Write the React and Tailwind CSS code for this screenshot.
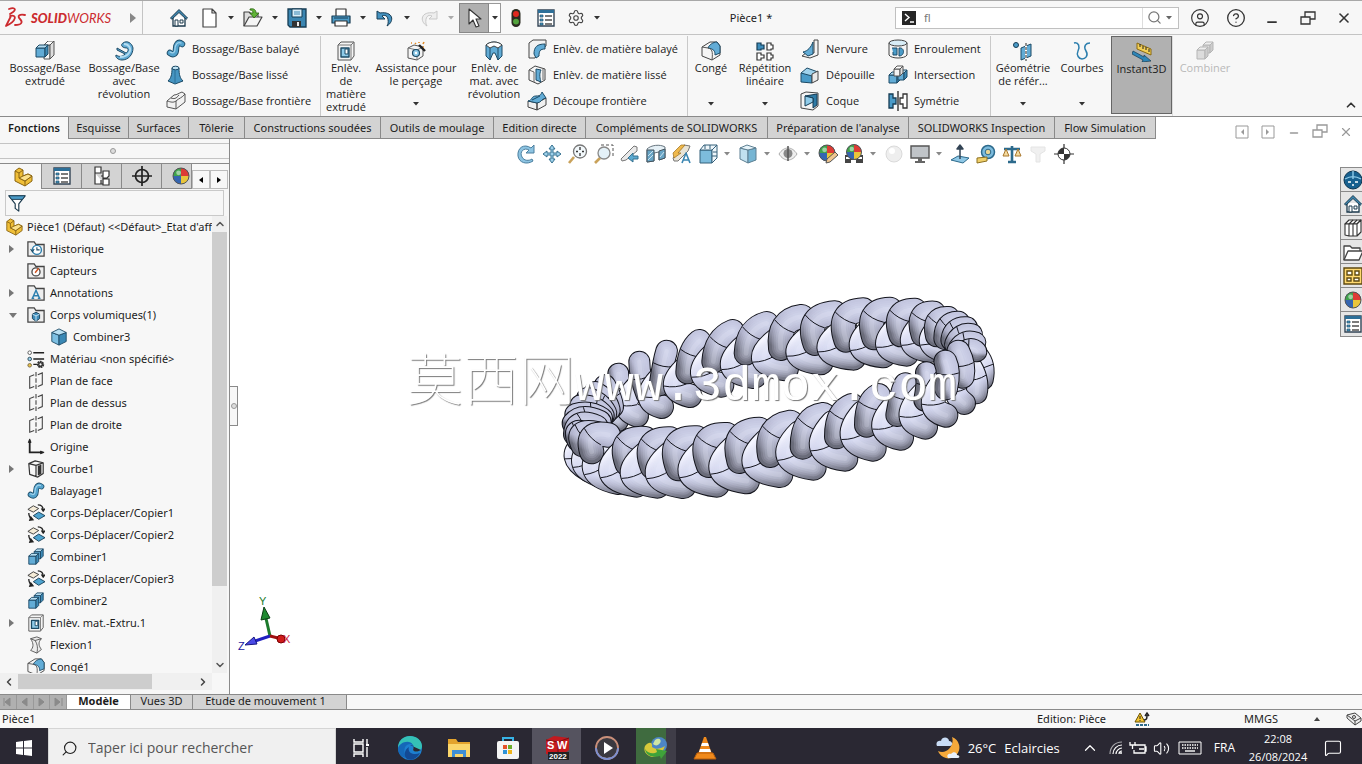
import { useState } from "react";
import { Search, Settings, Minus, X, ChevronUp, ChevronDown, ChevronLeft, ChevronRight, Volume2, CircleUser, CircleHelp, MessageSquare } from "lucide-react";

const Box = ({ x, y, w, h, d, front = "#62acd6", top = "#b5ddf1", side = "#3d8ab6", line = "#1d4a66" }) => (
    <g stroke={line} strokeWidth="1" strokeLinejoin="round">
        <path d={`M${x} ${y + d}h${w}v${h}h${-w}z`} fill={front} />
        <path d={`M${x} ${y + d}l${d} ${-d}h${w}l${-d} ${d}z`} fill={top} />
        <path d={`M${x + w} ${y + d}l${d} ${-d}v${h}l${-d} ${d}z`} fill={side} />
    </g>
);

const GreyBox = (props) => <Box front="#f4f4f4" top="#ffffff" side="#dedede" line="#555" {...props} />;

const Ball = ({ cx = 10, cy = 10, r = 8 }) => (
    <g>
        <circle cx={cx} cy={cy} r={r} fill="#3a7fd0" />
        <path d={`M${cx} ${cy}V${cy - r}A${r} ${r} 0 0 0 ${cx - r} ${cy}z`} fill="#3fa34a" />
        <path d={`M${cx} ${cy}V${cy - r}A${r} ${r} 0 0 1 ${cx + r} ${cy}z`} fill="#dd3b35" />
        <path d={`M${cx} ${cy}H${cx - r}A${r} ${r} 0 0 0 ${cx} ${cy + r}z`} fill="#3565b0" />
        <path d={`M${cx} ${cy}H${cx + r}A${r} ${r} 0 0 1 ${cx} ${cy + r}z`} fill="#e9c53a" />
        <circle cx={cx} cy={cy} r={r} fill="none" stroke="#555" strokeWidth="1" />
        <circle cx={cx - r * 0.3} cy={cy - r * 0.4} r={r * 0.3} fill="#fff" opacity="0.5" />
    </g>
);

const folder = <path d="M1 18V2h7l2 3h9v13z" fill="#eeeeee" stroke="#444" strokeWidth="1.4" />;
const sweep = (
    <g fill="none" strokeLinecap="round">
        <path d="M4 14c4 3 6 0 6-4s2-8 6-5" stroke="#1d4b66" strokeWidth="6.400" />
        <path d="M4 14c4 3 6 0 6-4s2-8 6-5" stroke="#54a3cd" strokeWidth="4.600" />
        <path d="M4 13c4 2 5 0 5-3s2-8 6-6" stroke="#a5d4ec" strokeWidth="1.200" />
    </g>
);
const fillet = (
    <g strokeLinejoin="round">
        <path d="M1 6l8-5h7l3 4v9l-8 5-10-4z" fill="#f5f5f5" stroke="#444" />
        <path d="M7 7c1-3 5-6 9-6l3 4v7l-5 2c0-4-1-6-7-7z" fill="#62acd6" stroke="#1d4b66" />
        <path d="M1 6l6 1c4 1 5 3 4 12" fill="none" stroke="#555" />
    </g>
);
const cutExtrude = (
    <g strokeLinejoin="round">
        <path d="M2 4l3-3h13v14l-3 4H2z" fill="#f5f5f5" stroke="#555" />
        <path d="M2 4h13l3-3M15 4v15" fill="none" stroke="#777" />
        <path d="M5 7h8v9H5z" fill="#8fcbe9" stroke="#1d4b66" strokeWidth="1.400" />
        <path d="M9 8h3v5H9z" fill="#fff" stroke="#1d4b66" />
    </g>
);
const listGlyph = (
    <g>
        <path d="M2 2h16v16H2z" fill="#fff" stroke="#345" strokeWidth="1.400" />
        <path d="M2 2h16v3H2z" fill="#2d6f98" />
        {[7, 11, 15].map((y) => (
            <g key={y}>
                <path d={`M4 ${y}h3v2H4z`} fill="#4a9bc8" stroke="#1d4b66" strokeWidth=".7" />
                <path d={`M9 ${y + 1}h7`} stroke="#333" strokeWidth="1.300" />
            </g>
        ))}
    </g>
);
const combine = (
    <g>
        <Box x={8} y={1} w={7} h={8} d={3} />
        <Box x={2} y={6} w={8} h={9} d={3} />
    </g>
);
const house = (
    <g>
        <path d="M4 9v9h12V9" fill="#fff" stroke="#1c3a4d" strokeWidth="1.300" />
        <path d="M10 1.500L1.500 10l1.300 1.300L10 4.500l7.200 6.800 1.300-1.300z" fill="#3c87b1" stroke="#1c3a4d" />
        <path d="M6 12h3v6H6zM11 12h3v3h-3z" fill="#fff" stroke="#1c3a4d" />
    </g>
);

const glyphs = {
    home: house,
    doc: <path d="M4 1h9l4 4v14H4zM13 1v4h4" fill="#fff" stroke="#444" strokeWidth="1.200" strokeLinejoin="round" />,
    open: (
        <g strokeLinejoin="round">
            <path d="M1 18V4h5l2 2h7v3" fill="#ddd" stroke="#444" strokeWidth="1.200" />
            <path d="M1 18L6 9h13l-5 9z" fill="#f5f5f5" stroke="#444" strokeWidth="1.200" />
            <path d="M7 1c4-1 6 1 6 4h3l-5 5-4-5h3c0-2-1-3-3-3z" fill="#5fb336" stroke="#2c6412" strokeWidth=".8" />
        </g>
    ),
    save: (
        <g>
            <path d="M1 1h18v18H3l-2-2z" fill="#3b86b2" stroke="#163c54" strokeWidth="1.300" />
            <path d="M5 1h10v8H5z" fill="#d9edf8" stroke="#163c54" />
            <path d="M7 4h6M7 6h6" stroke="#3b86b2" />
            <path d="M5 13h9v6H5z" fill="#333" /><path d="M10 14h2v4h-2z" fill="#eee" />
        </g>
    ),
    print: (
        <g strokeLinejoin="round">
            <path d="M5 8V1h10v7" fill="#fff" stroke="#333" strokeWidth="1.200" />
            <path d="M1 8h18v7H1z" fill="#4d9cc8" stroke="#163c54" strokeWidth="1.200" />
            <path d="M4 13h12v5H4z" fill="#fff" stroke="#333" strokeWidth="1.200" />
            <path d="M3 10h14" stroke="#163c54" />
        </g>
    ),
    undo: <path d="M2 3v8h8L7 8c4-2 7 1 6 8l-1 2c8-5 6-15-7-13z" fill="#4492c0" stroke="#163c54" strokeLinejoin="round" />,
    redo: <path d="M18 3v8h-8l3-3c-4-2-7 1-6 8l1 2C0 13 2 3 15 5z" fill="#eeeeee" stroke="#c9c9c9" strokeLinejoin="round" />,
    cursor: <path d="M5 1v15l4-4 3 7 3-1-3-7h5z" fill="#fff" stroke="#333" strokeWidth="1.100" strokeLinejoin="round" />,
    traffic: (
        <g>
            <rect x="5" y="0" width="10" height="20" rx="5" fill="#2b2b20" />
            <circle cx="10" cy="5.500" r="3.300" fill="#e0291f" /><circle cx="10" cy="14" r="3.300" fill="#52a33c" />
        </g>
    ),
    list: listGlyph,
    extrude: (
        <g>
            <GreyBox x={9} y={0} w={6} h={14} d={4} />
            <Box x={1} y={4} w={9} h={9} d={3} />
        </g>
    ),
    revolve: (
        <g>
            <path d="M3 7l9 5c2-1 3-4 1-5C8 7 6 4 9 2c4-3 9 0 10 5 0 7-5 12-11 12-4 0-7-3-6-5 3 2 6 2 9-1l-8-4z" fill="#62acd6" stroke="#1d4b66" strokeLinejoin="round" />
            <path d="M10 3c5 0 8 5 5 9-2 3-6 4-9 4" fill="none" stroke="#b5ddf1" strokeWidth="1.800" />
        </g>
    ),
    sweep,
    loft: (
        <g stroke="#1d4b66" strokeLinejoin="round">
            <path d="M6 3c0 7-1 10-4 13l7 3 8-3c-3-3-4-6-4-13z" fill="#4695c2" />
            <ellipse cx="9.500" cy="3" rx="3.500" ry="1.800" fill="#bfe2f3" />
            <path d="M9 5v14" stroke="#2a6e96" />
        </g>
    ),
    boundary: (
        <g stroke="#555" strokeLinejoin="round" fill="#f2f2f2">
            <path d="M1 10l7-6c3 0 5-2 8-3l3 2v8l-9 7-9-2z" />
            <path d="M1 10c4 1 6 2 9 0 3-3 6-3 9-7M10 10v8M5 7c3 1 5 1 8-3" fill="none" />
        </g>
    ),
    cutExtrude,
    hole: (
        <g strokeLinejoin="round">
            <path d="M2 7l6-3 9 2v9l-6 4-9-2z" fill="#f4f4f4" stroke="#555" /><path d="M2 7l9 2v10M11 9l6-3" fill="none" stroke="#777" />
            <circle cx="10" cy="12" r="3.500" fill="#8fcbe9" stroke="#1d4b66" strokeWidth="1.200" /><circle cx="10" cy="12" r="1.200" fill="#fff" />
            <path d="M13 4l6 6" stroke="#222" strokeWidth="2.400" /><path d="M9 3l1-1M13 1v1M17 3l1-2M5 2h1M17 6h1" stroke="#e08b2a" strokeWidth="1.600" />
        </g>
    ),
    cutRevolve: (
        <g strokeLinejoin="round">
            <path d="M2 4v11l4 4 3-7h2l3 7 4-4V4c-4-4-12-4-16 0z" fill="#62acd6" stroke="#1d4b66" />
            <path d="M2 4c4-4 12-4 16 0l-4 3-4-2-4 2z" fill="#fff" stroke="#444" /><path d="M6 7v12M14 7v12" stroke="#1d4b66" />
        </g>
    ),
    cutSweep: (
        <g strokeLinejoin="round">
            <path d="M2 4l4-3h13v6l-7 5-4 7H2z" fill="#f2f2f2" stroke="#444" />
            <path d="M7 15c0-7 3-10 11-10v5c-5 0-6 2-6 7l-3 2z" fill="#62acd6" stroke="#1d4b66" />
        </g>
    ),
    cutLoft: (
        <g strokeLinejoin="round">
            <path d="M2 5l6-4 10 3v11l-7 4-9-4z" fill="#f5f5f5" stroke="#444" />
            <path d="M9 4l5 1c-2 4-1 9 0 12l-5-2z" fill="#62acd6" stroke="#1d4b66" /><path d="M2 5l5 2v10M16 4v11" stroke="#666" fill="none" />
        </g>
    ),
    cutBoundary: (
        <g stroke="#1d4b66" strokeLinejoin="round">
            <path d="M1 10l9 2v7l-9-3zM10 12l9-5v7l-9 5z" fill="#f0f0f0" stroke="#444" />
            <path d="M1 10c4 0 3-5 8-5s5-2 6-4l4 6c-4 0-5 5-9 5z" fill="#62acd6" /><path d="M5 9l8-4" />
        </g>
    ),
    fillet,
    pattern: (
        <g strokeWidth="1.200">
            <path d="M2 2h4v2h3v4H6v1H2z" fill="#3e8dbb" stroke="#163c54" />
            <path d="M12 2h4v2h2v4h-2v1h-4zM2 12h4v2h3v3H6v2H2zM12 12h4v2h2v3h-2v2h-4z" fill="#fff" stroke="#333" />
        </g>
    ),
    rib: (
        <g strokeLinejoin="round">
            <path d="M14 1h4v15l-8 3-8-2 4-3h8z" fill="#f3f3f3" stroke="#444" /><path d="M13 3v12l-5 2-5-4c5-1 8-5 10-10z" fill="#62acd6" stroke="#1d4b66" />
        </g>
    ),
    draft: <g stroke="#1d4b66" strokeLinejoin="round"><path d="M1 8v9l11 1V8z" fill="#4a9bc8" /><path d="M1 8l6-5 11 4-6 4z" fill="#9fd2ec" /><path d="M12 9l6-3v9l-6 3z" fill="#e9e9e9" stroke="#444" /></g>,
    shell: (
        <g strokeLinejoin="round">
            <path d="M1 3l5-2 12 1v13l-5 4-12-2z" fill="#f4f4f4" stroke="#444" /><path d="M5 5l12-2v11l-4 3V7z" fill="#2f7ba6" stroke="#163c54" /><path d="M5 5v10l8-4V7z" fill="#8fcbe9" stroke="#163c54" />
        </g>
    ),
    wrap: (
        <g>
            <path d="M1 4v12c2 4 16 4 18 0V4z" fill="#f4f4f4" stroke="#444" /><ellipse cx="10" cy="4" rx="9" ry="3" fill="#d8edf7" stroke="#444" />
            <path d="M4 9h5v7H5v-3M11 9c6-1 6 8 0 8z" fill="#4a9bc8" stroke="#1d4b66" />
        </g>
    ),
    intersect: <g><Box x={1} y={7} w={8} h={8} d={3} /><Box x={10} y={5} w={6} h={7} d={3} /><GreyBox x={6} y={1} w={6} h={7} d={3} /></g>,
    mirror: (
        <g strokeWidth="1.300">
            <path d="M1 3h4v4h3v6H5v4H1z" fill="#4a9bc8" stroke="#163c54" /><path d="M10 0v20" stroke="#222" /><path d="M19 3h-4v4h-3v6h3v4h4z" fill="#fff" stroke="#333" />
        </g>
    ),
    refGeo: (
        <g>
            <circle cx="3" cy="4" r="2.500" fill="#4a9bc8" stroke="#163c54" /><path d="M8 7l10-4v12L8 19z" fill="#62acd6" stroke="#1d4b66" /><path d="M13 3v17" stroke="#fff" strokeWidth="2" /><path d="M13 2v18" stroke="#222" strokeDasharray="3 1" />
        </g>
    ),
    curves: <path d="M2 2c5-1 6 4 4 8s1 8 4 8 7-3 4-8 0-8 4-8" fill="none" stroke="#2d7fae" strokeWidth="1.500" />,
    instant: (
        <g strokeLinejoin="round">
            <path d="M5 1l14 6v6L5 7z" fill="#f3cf55" stroke="#8b6a10" /><path d="M8 2v3M11 4v3M14 5v3M17 7v3" stroke="#222" />
            <path d="M1 9l11 6v-2l7 6-9 1 1-2L0 12z" fill="#2f86b8" stroke="#163c54" strokeWidth=".7" />
        </g>
    ),
    combineGrey: (
        <g>
            <Box x={8} y={1} w={7} h={8} d={3} front="#dcdcdc" top="#eee" side="#cdcdcd" line="#b5b5b5" />
            <Box x={2} y={6} w={8} h={9} d={3} front="#dcdcdc" top="#eee" side="#cdcdcd" line="#b5b5b5" />
        </g>
    ),
    combine,
    part: (
        <g stroke="#8a6410" strokeLinejoin="round">
            <path d="M2 9V4l4-3 4 2v6l5-2 4 2v5l-7 5-10-5z" fill="#f0bf38" /><path d="M2 4l4 2 4-3M6 6v5l6 3 7-5M12 14v5" fill="none" /><path d="M6 11l4-2 5-2 4 2-7 5z" fill="#fbe08a" />
        </g>
    ),
    tree: (
        <g fill="#fff" stroke="#333" strokeWidth="1.200">
            <path d="M3 1h6v6H3zM3 7v11h6v-4M5 18h6M9 10h3" /><path d="M11 5h6v5l-2 2h-4zM11 13h6v6h-6z" />
        </g>
    ),
    target: <g fill="none" stroke="#222" strokeWidth="1.700"><circle cx="10" cy="10" r="6.500" /><path d="M10 0v20M0 10h20" /></g>,
    ball: <Ball />,
    filter: <g strokeLinejoin="round"><path d="M1 2h18l-7 9v8l-4-3v-5z" fill="#fff" stroke="#1c3a4d" strokeWidth="1.300" /><path d="M1 2h18l-3 4H4z" fill="#4a9bc8" stroke="#1c3a4d" /></g>,
    history: <g>{folder}<circle cx="11" cy="11" r="5" fill="#fff" stroke="#2d7fae" strokeWidth="1.600" /><path d="M11 8v3h3M4 10l2 3 2-3" fill="none" stroke="#1d4b66" strokeWidth="1.200" /></g>,
    sensors: <g>{folder}<circle cx="10" cy="11" r="4.500" fill="#fff" stroke="#444" strokeWidth="1.400" /><path d="M9 12l4-5" stroke="#d0521f" strokeWidth="1.600" /></g>,
    annotations: <g>{folder}<path d="M6 16l4-9 4 9M7 13h6M5 16h3M12 16h3" fill="none" stroke="#2d7fae" strokeWidth="1.600" /></g>,
    bodies: <g>{folder}<path d="M6 9l4-2 4 2v5l-4 3-4-3z" fill="#3e8dbb" stroke="#163c54" /><path d="M6 9l4 2 4-2M10 11v6" fill="none" stroke="#d0eaf7" /></g>,
    cube: <g stroke="#1d4b66" strokeLinejoin="round"><path d="M2 5l8 3v11l-8-4z" fill="#7dbfe2" /><path d="M10 8l8-3v10l-8 4z" fill="#3a88b5" /><path d="M2 5l8-4 8 4-8 3z" fill="#b9e0f3" /></g>,
    material: (
        <g>
            <circle cx="3" cy="3" r="2" fill="#fff" stroke="#555" /><circle cx="3" cy="10" r="2" fill="#9fd2ec" stroke="#245" /><circle cx="3" cy="17" r="2" fill="#e7c24b" stroke="#764" />
            <path d="M7 3h12M7 10h12M7 16h4" stroke="#222" strokeWidth="1.600" /><circle cx="15" cy="16" r="3" fill="none" stroke="#333" strokeWidth="2.200" strokeDasharray="2 .6" /><circle cx="15" cy="16" r="2" fill="none" stroke="#333" strokeWidth="1.500" />
        </g>
    ),
    plane: <g fill="none" stroke="#444" strokeWidth="1.200"><path d="M8 3L3 5v13l5-2M12 3l5-2v13l-5 2" /><path d="M10 0v20" strokeDasharray="5 2" /></g>,
    origin: <g stroke="#222" strokeWidth="1.600" fill="#222"><path d="M3 3v13h13" fill="none" strokeWidth="2" /><path d="M3 1l1.500 4h-3zM19 16l-4-1.500v3z" strokeWidth="1" /></g>,
    curve: <g fill="none" stroke="#333" strokeWidth="1.300" strokeLinejoin="round"><path d="M2 4l7-3 9 2v12l-6 4-9-3zM2 4l8 2 8-3M10 6v12" /><path d="M13 6v11M15 5v11" strokeWidth="2" /></g>,
    move: (
        <g strokeLinejoin="round">
            <path d="M1 6l6-4 6 3-6 4z" fill="#f5ecd8" stroke="#333" /><path d="M7 13l6-4 7 4-7 4z" fill="#4fa4d0" stroke="#163c54" />
            <path d="M12 1c4 0 6 2 6 6m-2-2l2 3 2-3M2 10c0 4 2 6 4 7" fill="none" stroke="#222" strokeWidth="1.500" /><path d="M2 19l6-1-4-5z" fill="#222" />
        </g>
    ),
    flex: <g strokeLinejoin="round" stroke="#555"><path d="M4 3l7-2 5 2c-4 4-3 8 0 12l-5 4-7-3c3-3 4-7 0-13z" fill="#ececec" /><path d="M4 3l5 2 7-2M9 5c3 5 3 9 2 14" fill="none" /></g>,
    rotate: <path d="M18 1v8h-8l3-3C8 3 3 8 6 13c2 4 7 4 10 2l1 2C11 21 3 19 2 12 1 4 8-1 15 4z" fill="#8dc4e2" stroke="#4b7f9f" strokeLinejoin="round" />,
    pan: <path d="M10 1l3 4h-2v4h4V7l4 3-4 3v-2h-4v4h2l-3 4-3-4h2v-4H5v2l-4-3 4-3v2h4V5H7z" fill="#9ed0ea" stroke="#35708f" strokeLinejoin="round" />,
    zoomFit: <g><path d="M1 19l5-6" stroke="#c9a25a" strokeWidth="2.600" /><circle cx="12" cy="7.500" r="6.500" fill="#f2f8fb" stroke="#777" strokeWidth="1.300" /><path d="M12 3v3M12 9v3M8 7.500h2M14 7.500h2" stroke="#333" strokeWidth="1.300" /></g>,
    zoomArea: <g><path d="M7 1h12v13" fill="none" stroke="#555" strokeDasharray="3 2" /><path d="M1 19l5-5" stroke="#c9a25a" strokeWidth="2.600" /><circle cx="10" cy="9" r="6" fill="#e4f1f8" stroke="#888" strokeWidth="1.300" /></g>,
    prevView: <g strokeLinejoin="round"><path d="M1 15L14 2l3 1v4L6 16l-4 1z" fill="#e9e9e9" stroke="#777" /><path d="M18 12h-5V9l-5 5 5 4v-3h5z" fill="#5ba9d0" stroke="#35708f" /></g>,
    section: <g strokeLinejoin="round"><path d="M1 5c4-4 13-5 18-2v11l-6 2V8L8 9v8l-7 1z" fill="#e5f0f6" stroke="#66747e" /><path d="M1 6h7v11l-7 1zM13 7l6-2v9l-6 2z" fill="#68a5c6" stroke="#44545e" /><path d="M2 12l5-5M2 16l5-5M14 13l4-5" stroke="#cbe3ef" /></g>,
    dynAnnot: <g strokeLinejoin="round"><path d="M1 14L12 1l6 1-2 5L6 17H2z" fill="#e9e4d6" stroke="#777" /><path d="M1 9l8-8h4L6 9h3l-7 5z" fill="#efb94c" stroke="#9b6d1b" strokeWidth=".7" /><path d="M10 19l4-10 4 10M11 16h6" fill="none" stroke="#3b86b2" strokeWidth="1.600" /></g>,
    orient: <g strokeLinejoin="round"><path d="M2 6h12v13H2z" fill="#7dbcdc" stroke="#35607a" /><path d="M2 6l4-5h13v13l-5 5V6zM14 6l5-5" fill="#eef6fa" stroke="#35607a" /><path d="M7 1v4M12 1v4M19 8h-4M14 12h5" stroke="#35607a" /></g>,
    display: <g strokeLinejoin="round" stroke="#5c7f92"><path d="M2 4l8 2v13l-8-4z" fill="#c0e0ef" /><path d="M10 6l8-2v12l-8 3z" fill="#76b5d3" /><path d="M2 4l7-3 9 3-8 2z" fill="#e6f4fa" /></g>,
    eye: <g><path d="M1 10c5-8 13-8 18 0-5 8-13 8-18 0z" fill="#eee" stroke="#aaa" /><circle cx="10" cy="9.500" r="4.500" fill="#888" /><path d="M10 2v15" stroke="#555" strokeWidth="1.500" /></g>,
    appearance: <g><Ball cx={9} cy={9} r={8} /><path d="M8 19l1-4 8-7 3 3-8 7z" fill="#f0c690" stroke="#555" /></g>,
    scene: <g><path d="M1 11h18v8H1z" fill="#444" /><path d="M2 13h4v2H2zM14 13h4v2h-4zM7 16h5v3H7z" fill="#fff" /><Ball cx={10} cy={8} r={7.5} /></g>,
    paleBall: <g><circle cx="10" cy="10" r="8" fill="#eeeeee" stroke="#dadada" /><circle cx="8" cy="7" r="3" fill="#fff" /></g>,
    monitor: <g><path d="M1 2h18v12H1z" fill="#c0c4c8" stroke="#555" strokeWidth="1.400" /><path d="M8 14h4v3h3v2H5v-2h3z" fill="#666" /></g>,
    normal: <g strokeLinejoin="round"><path d="M1 16l7-4 11 2-6 5z" fill="#8fc8e6" stroke="#2c6a8c" /><path d="M10 15V3M7 5l3-4 3 4z" stroke="#345" strokeWidth="1.500" fill="#345" /></g>,
    measure: <g><circle cx="12" cy="8" r="6.500" fill="#7cbbdd" stroke="#2c6a8c" strokeWidth="1.500" /><circle cx="12" cy="8" r="2.800" fill="#e8d594" stroke="#2c6a8c" /><path d="M1 14l10-1v4L1 19z" fill="#f0d06a" stroke="#8d7020" /></g>,
    scale: <g fill="none" stroke="#2c6a8c" strokeWidth="1.500"><path d="M10 2v16M6 18h8M2 5h16" strokeWidth="2.600" /><path d="M4 5l-3 7h6zM16 5l-3 7h6z" stroke="#a8762c" strokeWidth="1" fill="#f5dca0" /></g>,
    paleFilter: <path d="M3 3h14v4l-5 3v8H8v-8L3 7z" fill="#f0f0f0" stroke="#e4e4e4" />,
    mass: <g><path d="M10 0v20M0 10h20" stroke="#333" strokeWidth="1.200" /><circle cx="10" cy="10" r="6" fill="#fff" stroke="#333" /><path d="M10 10V4a6 6 0 0 0-6 6zM10 10v6a6 6 0 0 0 6-6z" fill="#333" /></g>,
    world: <g><circle cx="10" cy="10" r="9" fill="#17608f" stroke="#0d3550" /><path d="M2 9c5-3 11-3 16 0M10 1v8" stroke="#8fcbe9" fill="none" strokeWidth="1.400" /><path d="M5 12h3M12 12h3M9 15h2" stroke="#fff" strokeWidth="1.600" /></g>,
    library: <g fill="#fff" stroke="#333" strokeWidth="1.100" strokeLinejoin="round"><path d="M2 6l4-4 12 0-4 4z" /><path d="M2 6h4v12l-4-1zM6 6h4v12H6zM10 6h4v12h-4zM14 6l4-4v12l-4 4zM6 6l4-4M10 6l4-4" /></g>,
    folderOpen: <g fill="#fff" stroke="#444" strokeWidth="1.300" strokeLinejoin="round"><path d="M1 18V4h6l2 2h8v3" /><path d="M1 18L5 9h15l-4 9z" /></g>,
    palette: <g fill="#ffd970" stroke="#5f4a10" strokeWidth="1.400"><path d="M1 2h18v16H1z" /><path d="M4 5h5v4H4zM12 5h4v4h-4zM4 12h4v3H4zM11 12h5v3h-5z" fill="#fff" /></g>,
};

const Glyph = ({ name, size = 20 }) => (
    <svg width={size} height={size} viewBox="0 0 20 20" className="shrink-0" aria-hidden="true">{glyphs[name]}</svg>
);

const Caret = ({ color = "#333" }) => (
    <svg width="6" height="4" viewBox="0 0 6 4" className="shrink-0" aria-hidden="true"><path d="M0 0h6L3 3.500z" fill={color} /></svg>
);

const Restore = ({ size = 16 }) => (
    <svg width={size} height={size} viewBox="0 0 16 16" fill="none" stroke="currentColor" strokeWidth="1.300" aria-hidden="true">
        <path d="M5 7V2h10v7h-5" /><path d="M1 7h9v7H1z" />
    </svg>
);

const quickTools = [
    { name: "doc", label: "Nouveau" },
    { name: "open", label: "Ouvrir" },
    { name: "save", label: "Enregistrer" },
    { name: "print", label: "Imprimer" },
    { name: "undo", label: "Annuler" },
    { name: "redo", label: "Rétablir", muted: true },
];

const TitleBar = () => (
    <header className="flex h-[35px] shrink-0 items-center border-t border-b border-[#c4c4c4] border-t-[#a8a8a8] bg-[#f7f7f7]">
        <div className="flex h-full w-[143px] shrink-0 items-center border-r border-[#c4c4c4] pl-1">
            <svg width="23" height="22" viewBox="0 0 23 22" fill="none" stroke="#cc2b2f" strokeWidth="1.800" strokeLinecap="round" strokeLinejoin="round" aria-hidden="true">
                <path d="M5 2c5-2 8 0 4 3L6 7M6 9c7-2 7 5-4 10l5-10" /><path d="M21 8c-6-1-8 1-5 4s2 6-5 6" />
            </svg>
            <span className="ml-1 font-[Lato] text-[13px] text-[#cc2b2f] italic"><b className="font-black">SOLID</b>WORKS</span>
            <svg width="6" height="10" viewBox="0 0 6 10" className="mr-1.5 ml-auto" aria-hidden="true"><path d="M0 0l6 5-6 5z" fill="#888" /></svg>
        </div>
        <div className="flex h-full shrink-0 items-center pl-5">
            <button aria-label="Accueil" className="flex w-8 justify-center"><Glyph name="home" /></button>
            {quickTools.map((tool) => (
                <div key={tool.name} className="flex w-11 items-center">
                    <button aria-label={tool.label} className="flex w-7 justify-center"><Glyph name={tool.name} /></button>
                    <button aria-label={`${tool.label}, options`} className="flex w-4 justify-center py-2"><Caret color={tool.muted ? "#aaa" : "#333"} /></button>
                </div>
            ))}
            <button aria-label="Sélectionner" className="flex h-[30px] w-[30px] items-center justify-center border border-[#888] bg-[#b0b0b0]"><Glyph name="cursor" /></button>
            <button aria-label="Options de sélection" className="flex h-[30px] w-3 items-center justify-center border border-l-0 border-[#999] bg-white"><Caret /></button>
            <button aria-label="Reconstruire" className="flex w-[30px] justify-center"><Glyph name="traffic" size={18} /></button>
            <button aria-label="Propriétés du fichier" className="flex w-[30px] justify-center"><Glyph name="list" size={20} /></button>
            <button aria-label="Options" className="flex w-[30px] justify-center"><Settings size={18} strokeWidth={1.5} color="#444" /></button>
            <button aria-label="Autres options" className="flex w-3 justify-center py-2"><Caret /></button>
        </div>
        <h1 className="flex-1 pl-1 text-center">Pièce1 *</h1>
        <div className="flex h-[22px] w-[284px] shrink-0 items-center border border-[#c0c0c0] bg-white">
            <svg width="14" height="14" viewBox="0 0 14 14" className="mr-2 ml-1.5 shrink-0" aria-hidden="true">
                <path d="M0 0h14v14H0z" fill="#262626" /><path d="M3 3l4 3.500L3 10M8 11h4" fill="none" stroke="#fff" strokeWidth="1.400" />
            </svg>
            <input aria-label="Recherche de commandes" defaultValue="fl" className="min-w-0 flex-1 text-[#777] outline-none" />
            <button aria-label="Rechercher" className="flex h-full w-6 items-center justify-center border-l border-[#ddd]"><Search size={15} color="#777" /></button>
            <button aria-label="Options de recherche" className="flex w-3 items-center"><Caret color="#666" /></button>
        </div>
        <div className="flex shrink-0 items-center pl-[3px] text-[#333]">
            <button aria-label="Connexion" className="flex w-9 justify-center"><CircleUser size={20} strokeWidth={1.4} /></button>
            <button aria-label="Aide" className="flex w-9 justify-center"><CircleHelp size={20} strokeWidth={1.6} /></button>
            <button aria-label="Réduire" className="flex w-9 justify-center pt-2"><Minus size={14} strokeWidth={3} /></button>
            <button aria-label="Restaurer" className="flex w-9 justify-center"><Restore /></button>
            <button aria-label="Fermer" className="flex w-9 justify-center"><X size={16} strokeWidth={2.4} /></button>
        </div>
    </header>
);

const BigTool = ({ icon, lines, width, menu }) => (
    <button className={`flex h-full shrink-0 flex-col items-center pt-[5px] ${width}`}>
        <Glyph name={icon} />
        <span className="leading-[13px] whitespace-nowrap">
            {lines.map((line) => <span key={line} className="block">{line}</span>)}
        </span>
        {menu && <span className="mt-auto pb-[10px]"><Caret /></span>}
    </button>
);

const ToolColumn = ({ tools, width }) => (
    <div className={`flex shrink-0 flex-col ${width}`}>
        {tools.map(([icon, label]) => (
            <button key={icon} className="flex h-[26px] items-center gap-1.5 whitespace-nowrap"><Glyph name={icon} />{label}</button>
        ))}
    </div>
);

const Ribbon = () => (
    <div className="flex h-[82px] shrink-0 border-b border-[#8a8a8a] bg-[#f7f7f7] pt-px font-['Open_Sans',sans-serif]">
        <div className="flex w-[321px] shrink-0 border-r border-[#c9c9c9]">
            <BigTool icon="extrude" lines={["Bossage/Base", "extrudé"]} width="w-[90px]" />
            <BigTool icon="revolve" lines={["Bossage/Base", "avec", "révolution"]} width="w-[68px]" />
            <ToolColumn width="pl-2" tools={[["sweep", "Bossage/Base balayé"], ["loft", "Bossage/Base lissé"], ["boundary", "Bossage/Base frontière"]]} />
        </div>
        <div className="flex w-[367px] shrink-0 border-r border-[#c9c9c9]">
            <BigTool icon="cutExtrude" lines={["Enlèv.", "de", "matière", "extrudé"]} width="w-[50px]" />
            <BigTool icon="hole" lines={["Assistance pour", "le perçage"]} width="w-[90px]" menu />
            <BigTool icon="cutRevolve" lines={["Enlèv. de", "mat. avec", "révolution"]} width="w-[66px]" />
            <ToolColumn width="" tools={[["cutSweep", "Enlèv. de matière balayé"], ["cutLoft", "Enlèv. de matière lissé"], ["cutBoundary", "Découpe frontière"]]} />
        </div>
        <div className="flex w-[303px] shrink-0 border-r border-[#c9c9c9]">
            <BigTool icon="fillet" lines={["Congé"]} width="w-[46px]" menu />
            <BigTool icon="pattern" lines={["Répétition", "linéaire"]} width="w-[62px]" menu />
            <ToolColumn width="w-[92px] pl-1" tools={[["rib", "Nervure"], ["draft", "Dépouille"], ["shell", "Coque"]]} />
            <ToolColumn width="" tools={[["wrap", "Enroulement"], ["intersect", "Intersection"], ["mirror", "Symétrie"]]} />
        </div>
        <div className="flex shrink-0">
            <BigTool icon="refGeo" lines={["Géométrie", "de référ..."]} width="w-[64px]" menu />
            <BigTool icon="curves" lines={["Courbes"]} width="w-[54px]" menu />
        </div>
        <div className="ml-0.5 shrink-0 pb-0.5"><BigTool icon="instant" lines={["Instant3D"]} width="w-[61px] border border-[#666] bg-[#b1b1b1]" /></div>
        <div className="shrink-0 border-l border-[#ddd] text-[#b9b9b9]"><BigTool icon="combineGrey" lines={["Combiner"]} width="w-[64px]" /></div>
        <button aria-label="Réduire le ruban" className="mt-auto mr-1 mb-1 ml-auto"><ChevronUp size={14} strokeWidth={3} color="#333" /></button>
    </div>
);

const ribbonTabs = [
    ["Fonctions", "w-[69px]"],
    ["Esquisse", "w-[60px]"],
    ["Surfaces", "w-[60px]"],
    ["Tôlerie", "w-[56px]"],
    ["Constructions soudées", "w-[136px]"],
    ["Outils de moulage", "w-[113px]"],
    ["Edition directe", "w-[92px]"],
    ["Compléments de SOLIDWORKS", "w-[182px]"],
    ["Préparation de l'analyse", "w-[141px]"],
    ["SOLIDWORKS Inspection", "w-[146px]"],
    ["Flow Simulation", "w-[101px]"],
];

const RibbonTabs = () => {
    const [active, setActive] = useState("Fonctions");
    return (
        <div className="flex h-[22px] shrink-0 bg-white">
            {ribbonTabs.map(([label, width]) => (
                <button
                    key={label}
                    onClick={() => setActive(label)}
                    className={`shrink-0 border-r border-[#8a8a8a] whitespace-nowrap ${width} ${active === label ? "bg-[#f7f7f7] font-semibold" : "border-b bg-[#d3d3d3]"}`}
                >
                    {label}
                </button>
            ))}
            <div className="ml-auto flex items-end text-[#999]">
                {["M9 4v6L6 7z", "M5 4v6l3-3z"].map((d) => (
                    <button key={d} aria-label="Ancrer le document" className="flex w-[26px] justify-center">
                        <svg width="14" height="14" viewBox="0 0 14 14" aria-hidden="true"><path d="M1 1h12v12H1z" fill="none" stroke="currentColor" /><path d={d} fill="currentColor" /></svg>
                    </button>
                ))}
                <button aria-label="Réduire le document" className="flex w-[26px] justify-center"><Minus size={12} strokeWidth={3} /></button>
                <button aria-label="Restaurer le document" className="flex w-[26px] justify-center"><Restore /></button>
                <button aria-label="Fermer le document" className="flex w-[26px] justify-center"><X size={14} strokeWidth={2} /></button>
                <span className="w-[3px]" />
            </div>
        </div>
    );
};

const treeItems = [
    { icon: "history", label: "Historique", arrow: "closed" },
    { icon: "sensors", label: "Capteurs" },
    { icon: "annotations", label: "Annotations", arrow: "closed" },
    { icon: "bodies", label: "Corps volumiques(1)", arrow: "open" },
    { icon: "cube", label: "Combiner3", nested: true },
    { icon: "material", label: "Matériau <non spécifié>" },
    { icon: "plane", label: "Plan de face" },
    { icon: "plane", label: "Plan de dessus" },
    { icon: "plane", label: "Plan de droite" },
    { icon: "origin", label: "Origine" },
    { icon: "curve", label: "Courbe1", arrow: "closed" },
    { icon: "sweep", label: "Balayage1" },
    { icon: "move", label: "Corps-Déplacer/Copier1" },
    { icon: "move", label: "Corps-Déplacer/Copier2" },
    { icon: "combine", label: "Combiner1" },
    { icon: "move", label: "Corps-Déplacer/Copier3" },
    { icon: "combine", label: "Combiner2" },
    { icon: "cutExtrude", label: "Enlèv. mat.-Extru.1", arrow: "closed" },
    { icon: "flex", label: "Flexion1" },
    { icon: "fillet", label: "Congé1" },
];

const panelTabs = [
    ["part", "Arbre de création"],
    ["list", "Propriétés"],
    ["tree", "Configurations"],
    ["target", "Cotations"],
    ["ball", "Apparences"],
];

const FeaturePanel = () => {
    const [tab, setTab] = useState("part");
    return (
        <aside className="flex w-[230px] shrink-0 flex-col border-r border-[#8a8a8a] bg-[#f7f7f7] pt-1">
            <div className="flex h-4 shrink-0 items-center justify-center border-y border-[#c4c4c4] pr-1">
                <span className="h-1.5 w-1.5 rounded-full border border-[#999] bg-[#ddd]" />
            </div>
            <div className="mt-1 flex h-[26px] shrink-0 overflow-hidden border-t border-[#8a8a8a]">
                {panelTabs.map(([icon, label]) => (
                    <button
                        key={icon}
                        aria-label={label}
                        onClick={() => setTab(icon)}
                        className={`flex shrink-0 items-center justify-center border-r border-[#8a8a8a] ${icon === "ball" ? "w-[30px] pl-2" : icon === "part" ? "w-[42px] pl-1" : "w-10"} ${tab === icon ? "" : "border-b bg-[#d3d3d3]"}`}
                    >
                        <Glyph name={icon} />
                    </button>
                ))}
                <button aria-label="Onglets précédents" className="mt-1.5 flex w-[18px] items-center justify-center border border-[#bbb] bg-[#f7f7f7]">
                    <svg width="4" height="6" viewBox="0 0 4 6"><path d="M4 0v6L0 3z" /></svg>
                </button>
                <button aria-label="Onglets suivants" className="mt-1.5 flex w-[18px] items-center justify-center border border-[#bbb] bg-[#f7f7f7]">
                    <svg width="4" height="6" viewBox="0 0 4 6"><path d="M0 0v6l4-3z" /></svg>
                </button>
            </div>
            <label className="mx-[5px] mt-px flex h-[26px] shrink-0 items-center border border-[#c9c9c9] pl-0.5">
                <Glyph name="filter" size={18} />
                <input aria-label="Filtrer l'arbre" className="min-w-0 flex-1 outline-none" />
            </label>
            <div className="flex min-h-0 flex-1">
                <ul className="min-w-0 flex-1 overflow-hidden">
                    <li className="flex h-[22px] items-center gap-1 pl-[5px] whitespace-nowrap"><Glyph name="part" size={18} />Pièce1 (Défaut) &lt;&lt;Défaut&gt;_Etat d'affichage 1&gt;</li>
                    {treeItems.map((item) => (
                        <li key={item.label} className={`flex h-[22px] items-center whitespace-nowrap ${item.nested ? "pl-[50px]" : "pl-[9px]"}`}>
                            {!item.nested && (
                                <span className="w-[18px]">
                                    {item.arrow === "closed" && <svg width="5" height="8" viewBox="0 0 5 8"><path d="M0 0l5 4-5 4z" fill="#777" /></svg>}
                                    {item.arrow === "open" && <svg width="8" height="5" viewBox="0 0 8 5"><path d="M0 0h8L4 5z" fill="#777" /></svg>}
                                </span>
                            )}
                            <Glyph name={item.icon} size={18} />
                            <span className="pl-[5px]">{item.label}</span>
                        </li>
                    ))}
                </ul>
                <div className="mr-0.5 flex w-[15px] flex-col bg-[#f0f0f0]">
                    <button aria-label="Défiler vers le haut" className="flex h-4 items-center justify-center"><ChevronUp size={12} strokeWidth={3} color="#555" /></button>
                    <div className="flex-[353] bg-[#cdcdcd]" />
                    <div className="flex-[71]" />
                    <button aria-label="Défiler vers le bas" className="flex h-4 items-center justify-center"><ChevronDown size={12} strokeWidth={3} color="#555" /></button>
                </div>
            </div>
            <div className="mr-[17px] mb-1 flex h-[17px] shrink-0 bg-[#f0f0f0]">
                <button aria-label="Défiler à gauche" className="flex w-[18px] items-center justify-center"><ChevronLeft size={12} strokeWidth={3} color="#444" /></button>
                <div className="my-px flex-[134] bg-[#cdcdcd]" />
                <div className="flex-[42]" />
                <button aria-label="Défiler à droite" className="flex w-[18px] items-center justify-center"><ChevronRight size={12} strokeWidth={3} color="#444" /></button>
            </div>
        </aside>
    );
};

// Centre lines of the braid's strands: start, control point, end, tube width.
// Each lower strand comes out from behind the upper strand of the same index.
const backLower = [
    [205, 340, 150, 390, 205, 410, 60], [265, 300, 195, 370, 262, 393, 68], [335, 275, 265, 345, 335, 365, 72], [412, 245, 335, 312, 420, 332, 72],
    [490, 210, 415, 280, 515, 300, 74], [585, 185, 500, 258, 612, 273, 76], [682, 165, 590, 235, 708, 250, 76], [790, 150, 690, 218, 812, 232, 76],
    [885, 135, 780, 205, 910, 218, 76], [970, 128, 885, 200, 1000, 212, 74], [1050, 120, 965, 195, 1070, 208, 72], [1115, 118, 1045, 185, 1140, 198, 70],
    [1160, 130, 1110, 180, 1180, 200, 64],
];
const backUpper = [
    [205, 266, 200, 300, 215, 360, 64], [268, 230, 268, 275, 290, 330, 64], [350, 198, 340, 230, 330, 300, 66], [448, 168, 415, 195, 412, 262, 70],
    [548, 138, 495, 160, 490, 230, 70], [650, 115, 592, 130, 588, 205, 72], [755, 95, 682, 105, 692, 190, 74], [855, 84, 765, 90, 795, 175, 74],
    [940, 75, 858, 78, 888, 165, 74], [1020, 73, 945, 74, 972, 158, 74], [1095, 75, 1025, 74, 1052, 150, 72], [1152, 83, 1095, 80, 1118, 150, 70],
    [1195, 98, 1145, 95, 1160, 152, 68],
];
const rightTurn = [
    [1225, 112, 1185, 110, 1185, 160, 68], [1250, 128, 1210, 125, 1205, 165, 66], [1266, 148, 1230, 140, 1215, 178, 64], [1277, 172, 1245, 160, 1225, 190, 62],
    [1280, 200, 1262, 180, 1235, 205, 62],
];
const rightEdge = [
    [1285, 210, 1310, 240, 1300, 285, 60], [1255, 230, 1290, 280, 1280, 325, 64],
];
const frontLower = [
    [98, 475, 40, 515, 115, 560, 62], [125, 480, 55, 545, 160, 578, 66], [160, 490, 85, 570, 205, 594, 70], [218, 500, 130, 580, 260, 600, 74],
    [290, 505, 192, 585, 322, 602, 76], [365, 505, 268, 584, 400, 602, 78], [460, 500, 368, 580, 500, 598, 78], [552, 490, 462, 570, 590, 588, 78],
    [650, 470, 562, 553, 690, 569, 78], [750, 445, 665, 530, 790, 547, 78], [850, 415, 768, 505, 885, 520, 78], [940, 385, 865, 470, 970, 490, 78],
    [1035, 365, 962, 440, 1053, 458, 76], [1118, 330, 1045, 405, 1126, 426, 74], [1180, 290, 1115, 370, 1188, 391, 72], [1230, 270, 1195, 320, 1243, 355, 68],
];
const leftTurn = [
    [165, 302, 185, 340, 188, 365, 66], [135, 322, 170, 340, 178, 375, 66], [112, 340, 150, 350, 168, 385, 66], [92, 362, 135, 360, 160, 392, 66],
    [77, 388, 118, 375, 155, 400, 66], [70, 415, 95, 385, 150, 410, 68], [75, 448, 78, 398, 140, 425, 70],
];
const frontUpper = [
    [110, 450, 70, 425, 85, 465, 70], [140, 445, 75, 430, 98, 480, 72], [175, 450, 105, 435, 125, 500, 74], [225, 457, 145, 442, 172, 518, 76],
    [285, 462, 202, 455, 232, 535, 76], [360, 463, 275, 460, 308, 545, 76], [440, 460, 348, 456, 385, 550, 76], [530, 450, 440, 446, 476, 540, 76],
    [628, 434, 542, 436, 568, 528, 76], [722, 413, 645, 425, 660, 510, 76], [820, 390, 758, 398, 758, 485, 76], [906, 362, 860, 380, 860, 455, 74],
    [985, 332, 950, 350, 950, 420, 74], [1066, 298, 1052, 330, 1042, 390, 70], [1130, 264, 1135, 290, 1125, 345, 68], [1186, 230, 1200, 260, 1188, 310, 70],
];
const frontCap = [1225, 200, 1245, 240, 1238, 275, 70];

const Strand = ({ line, shade }) => {
    const [x0, y0, cx, cy, x1, y1, w] = line;
    const d = `M${x0} ${y0}Q${cx} ${cy} ${x1} ${y1}`;
    // middle of the curve and the direction across it, for the seam
    const mx = (x0 + 2 * cx + x1) / 4;
    const my = (y0 + 2 * cy + y1) / 4;
    const len = Math.hypot(x1 - x0, y1 - y0) || 1;
    const nx = (-(y1 - y0) / len) * (w / 2 - 3);
    const ny = ((x1 - x0) / len) * (w / 2 - 3);
    const bend = w * 0.14;
    const bx = mx + ((x1 - x0) / len) * bend;
    const by = my + ((y1 - y0) / len) * bend;
    return (
        <g fill="none" strokeLinecap="round">
            <path d={d} stroke="#14151d" strokeWidth={w + 2} />
            <path d={d} stroke={`url(#${shade})`} strokeWidth={w - 4} />
            <path d={d} stroke="#dadcf4" strokeWidth={w * 0.7} opacity="0.16" />
            <path d={d} stroke="#dcdef5" strokeWidth={w * 0.54} opacity="0.16" />
            <path d={d} stroke="#e2e4f8" strokeWidth={w * 0.38} opacity="0.16" />
            <path d={d} stroke="#f1f2ff" strokeWidth={w * 0.2} opacity="0.2" />
            <path d={`M${mx + nx} ${my + ny}Q${bx} ${by} ${mx - nx} ${my - ny}`} stroke="#14151d" strokeWidth="3" />
        </g>
    );
};

const Weave = ({ lower, upper }) => upper.map((line, i) => (
    <g key={i}>
        <Strand line={lower[i]} shade="lower" />
        <Strand line={line} shade="upper" />
    </g>
));

const Braid = () => (
    <svg viewBox="0 0 1380 675" className="absolute top-[146px] left-[320px] w-[460px]" role="img" aria-label="Modèle de bracelet tressé">
        <defs>
            <linearGradient id="upper" gradientUnits="objectBoundingBox" x1="0.8" y1="0" x2="0.3" y2="1.200">
                <stop offset="0" stopColor="#c4c7e0" /><stop offset="0.5" stopColor="#b0b2cb" /><stop offset="1" stopColor="#6a6c7a" />
            </linearGradient>
            <linearGradient id="lower" gradientUnits="objectBoundingBox" x1="0.400" y1="0" x2="0.600" y2="1.400">
                <stop offset="0" stopColor="#f4f5ff" /><stop offset="0.500" stopColor="#cfd2ec" /><stop offset="1" stopColor="#747685" />
            </linearGradient>
        </defs>
        <Weave lower={backLower} upper={backUpper} />
        {rightEdge.map((line) => <Strand key={line} line={line} shade="lower" />)}
        {rightTurn.map((line) => <Strand key={line} line={line} shade="upper" />)}
        <Strand line={frontLower[15]} shade="lower" />
        <Strand line={frontCap} shade="upper" />
        {leftTurn.map((line) => <Strand key={line} line={line} shade="upper" />)}
        <Weave lower={frontLower.slice(0, 3)} upper={frontUpper.slice(0, 3)} />
        <Weave lower={frontLower.slice(3, 15)} upper={frontUpper.slice(4)} />
    </svg>
);

const viewTools = [
    ["rotate"], ["pan"], ["zoomFit"], ["zoomArea"], ["prevView"], ["section"], ["dynAnnot"], ["orient", true], ["display", true], ["eye", true],
    ["appearance"], ["scene", true], ["paleBall"], ["monitor", true], ["normal"], ["measure"], ["scale"], ["paleFilter"], ["mass"],
];

const Viewport = () => (
    <main className="relative min-w-0 flex-1 overflow-hidden bg-white">
        <div className="flex h-[30px] items-center justify-center pr-0.5">
            {viewTools.map(([name, menu]) => (
                <button key={name} aria-label={name} className={`flex items-center gap-1.5 pl-[3px] ${menu ? "w-10" : "w-[26px]"}`}>
                    <Glyph name={name} />
                    {menu && <Caret color="#888" />}
                </button>
            ))}
        </div>
        <Braid />
        <p className="absolute top-[197px] left-[177px] flex items-baseline leading-[80px] whitespace-nowrap text-white [text-shadow:1px_1px_1px_#777]">
            <span className="font-['Noto_Sans_CJK_SC',sans-serif] text-[56px] font-thin">莫西网</span>
            <span className="font-['Liberation_Mono',monospace] text-[49px]">www.3dmox.com</span>
        </p>
        <div className="absolute top-[247px] left-0 flex h-10 w-2 items-center justify-center border border-l-0 border-[#8a8a8a] bg-[#f7f7f7]">
            <span className="h-1.5 w-1.5 shrink-0 rounded-full border border-[#999] bg-[#ddd]" />
        </div>
        <svg width="56" height="60" viewBox="0 0 56 60" className="absolute bottom-10 left-[6px]" aria-label="Repère">
            <path d="M34 42L29 20" stroke="#1c7a2c" strokeWidth="3" /><path d="M28 13l6 11-9 2z" fill="#1f8a30" stroke="#0c3d14" />
            <path d="M34 42l-18 6" stroke="#2020c0" strokeWidth="3" /><path d="M9 51l9-8 3 7z" fill="#4a4ae6" stroke="#151580" />
            <path d="M34 42l8 2" stroke="#a01010" strokeWidth="3" /><circle cx="45" cy="45" r="4" fill="#d01a1a" stroke="#700" />
            <text x="23" y="11" fontSize="11" fill="#1c7a2c" fontFamily="Liberation Sans">Y</text>
            <text x="47" y="49" fontSize="11" fill="#d01a3a" fontFamily="Liberation Sans">X</text>
            <text x="2" y="56" fontSize="11" fill="#2020a0" fontFamily="Liberation Sans">Z</text>
        </svg>
        <div className="absolute top-7 right-0 flex flex-col border border-r-0 border-[#8a8a8a] bg-[#e6e6e6]">
            {["world", "home", "library", "folderOpen", "palette", "ball", "list"].map((name) => (
                <button key={name} aria-label={name} className="flex h-6 w-[21px] items-center border-b border-[#8a8a8a] pl-0.5 last:border-b-0"><Glyph name={name} /></button>
            ))}
        </div>
    </main>
);

const ModelTabs = () => (
    <div className="flex h-4 shrink-0 border-y border-[#8a8a8a] bg-[#f7f7f7] leading-3">
        <div className="flex w-[67px] bg-[#b0b0b0] text-[#8a8a8a]">
            {["M9 3v8L4 7zM3 3v8", "M9 3v8L4 7z", "M5 3v8l5-4z", "M4 3v8l5-4zM11 3v8"].map((d) => (
                <button key={d} aria-label="Faire défiler les onglets" className="flex flex-1 items-center justify-center border-r border-[#999]">
                    <svg width="14" height="14" viewBox="0 0 14 14" stroke="currentColor" fill="currentColor" aria-hidden="true"><path d={d} /></svg>
                </button>
            ))}
        </div>
        <button className="w-[64px] border-r border-[#8a8a8a] bg-white pb-0.5 font-bold">Modèle</button>
        <button className="w-[62px] border-r border-[#8a8a8a] bg-[#d3d3d3] pb-0.5">Vues 3D</button>
        <button className="w-[154px] border-r border-[#8a8a8a] bg-[#d3d3d3] pr-2 pb-0.5 whitespace-nowrap">Etude de mouvement 1</button>
    </div>
);

const StatusBar = () => (
    <footer className="flex h-[18px] shrink-0 items-center bg-[#f7f7f7] pl-0.5">
        <span>Pièce1</span>
        <span className="ml-auto">Edition: Pièce</span>
        <svg width="16" height="16" viewBox="0 0 16 16" className="ml-7" aria-hidden="true">
            <path d="M6 2l5 9H1z" fill="#f4c531" stroke="#6b5200" /><path d="M6 5v3M6 9v1" stroke="#222" /><path d="M10 9c3 0 3-2 3-5m-2 1l2-3 2 3" fill="none" stroke="#222" strokeWidth="1.500" /><path d="M2 14h13" stroke="#2c6a8c" strokeWidth="2" strokeDasharray="3 1" />
        </svg>
        <span className="ml-[94px]">MMGS</span>
        <svg width="6" height="4" viewBox="0 0 6 4" className="ml-9" aria-hidden="true"><path d="M0 4h6L3 0z" fill="#444" /></svg>
        <svg width="16" height="14" viewBox="0 0 16 14" className="ml-[26px]" fill="#eee" stroke="#444" aria-hidden="true"><path d="M1 3l8-2 6 5v3l-6 4-8-7z" /><path d="M1 3l8 6 6-3M9 9v4" /><circle cx="8" cy="5" r="1.500" /></svg>
    </footer>
);

const apps = [
    { name: "Affichage des tâches", art: <g fill="none" stroke="#fff" strokeWidth="1.400"><path d="M5 8h9v8H5zM5 3v3h9V3M5 21v-3h9v3M18 3v5M18 11v10" /><path d="M17 9h3" strokeWidth="2" /></g> },
    {
        name: "Edge",
        art: (
            <g>
                <circle cx="12" cy="12" r="12" fill="#1d7fd0" />
                <path d="M0 12C0 4 6 0 12 0s12 4 12 10c0 5-6 7-9 4 2-3 0-7-4-7C6 7 1 8 0 12z" fill="#35c1b6" />
                <path d="M15 14c2-3 0-6-3-6-6 0-8 9-2 14-6 0-10-4-10-9 1-7 12-10 15-4 2 2 1 4 0 5z" fill="#1568b8" />
                <path d="M11 11c-2 5 4 9 11 6-3 6-9 8-13 6-4-4-2-10 2-12z" fill="#134a94" />
                <path d="M12 9c4 0 4 3 3 5 2 3 6 1 8 0" fill="#2a2833" />
            </g>
        ),
    },
    { name: "Explorateur de fichiers", art: <g><path d="M1 3h8l2 3h12v15H1z" fill="#e3a32c" /><path d="M1 8h22v13H1z" fill="#fbd66b" /><path d="M5 14h14v7h-3v-3H8v3H5z" fill="#3f8fd6" /></g> },
    { name: "Microsoft Store", art: <g><path d="M7 6V2h10v4" fill="none" stroke="#37b3e6" strokeWidth="2" /><rect x="1" y="5" width="22" height="18" rx="2" fill="#f5f5f5" /><path d="M7 9h4v4H7z" fill="#e5542c" /><path d="M12 9h4v4h-4z" fill="#6cae2b" /><path d="M7 14h4v4H7z" fill="#2f93d8" /><path d="M12 14h4v4h-4z" fill="#f0b51c" /></g> },
    {
        name: "SOLIDWORKS 2022",
        width: "w-[49px] bg-[#55535f]",
        art: (
            <g fontFamily="Liberation Sans" fontWeight="bold" fill="#fff">
                <path d="M1 4l8-4 15 2v12l-8 6-15-2z" fill="#c41a1f" /><path d="M1 4l12 2 11-4M13 6v14" stroke="#7b0c10" fill="none" />
                <text x="2" y="13" fontSize="11">S</text><text x="12" y="13" fontSize="11">W</text><path d="M3 16h21v8H3z" fill="#222" /><text x="4" y="23" fontSize="8">2022</text>
            </g>
        ),
    },
    { name: "Lecteur", width: "w-[51px]", art: <g><circle cx="12" cy="12" r="11" fill="#3b3940" stroke="#c98f7a" strokeWidth="1.800" /><path d="M1 12a11 11 0 0 0 22 0" fill="none" stroke="#7c8fd0" strokeWidth="1.800" /><path d="M9 6l9 6-9 6z" fill="#fff" /></g> },
    {
        name: "Internet Download Manager",
        width: "ml-1 w-[40px] border-r-[10px] border-[#3f3d48] bg-[#3f6b3f] pl-2",
        art: <g><circle cx="16" cy="9" r="8" fill="#4d86c6" /><path d="M12 4c4-3 7 0 5 3s-5 3-7 1z" fill="#cfe6a4" /><path d="M2 10c4-5 8-4 7 1 4 3 8 2 13-1l-4 9-9 2C3 19 0 15 2 10z" fill="#d7c93a" /><path d="M2 13c3 5 9 5 12 3l-1-3 11 2-6 8-1-3C10 22 3 20 2 13z" fill="#3fa33a" /></g>,
    },
    { name: "VLC", width: "w-[58px]", art: <g><path d="M11 1h2l6 17H5z" fill="#f08a1c" /><path d="M9 7h6l1 3H8zM7 13h10l1 3H6z" fill="#fff" /><path d="M4 17h16l3 6H1z" fill="#f08a1c" stroke="#b95f0c" /></g> },
];

const Taskbar = () => (
    <nav className="h-9 shrink-0 overflow-hidden bg-[#2a2833] font-['Open_Sans',sans-serif] text-[13px] text-white">
        <div className="flex h-10 items-stretch">
            <button aria-label="Démarrer" className="flex w-12 items-center justify-center">
                <svg width="16" height="16" viewBox="0 0 16 16" aria-hidden="true"><path d="M0 2l7-1v6.500H0zM8 1l8-1v7.500H8zM0 8.500h7V15l-7-1zM8 8.500h8V16l-8-1z" fill="#fff" /></svg>
            </button>
            <label className="flex w-[288px] items-center gap-2.5 border border-[#d5d5d5] bg-[#f0f0f0] pl-3">
                <Search size={17} strokeWidth={1.6} color="#222" className="-scale-x-100" />
                <input aria-label="Rechercher" placeholder="Taper ici pour rechercher" className="min-w-0 flex-1 text-sm text-[#444] outline-none placeholder:text-[#555]" />
            </label>
            {apps.map((app) => (
                <button key={app.name} aria-label={app.name} className={`flex items-center justify-center ${app.width || "w-[49px]"}`}>
                    <svg width="24" height="24" viewBox="0 0 24 24" className="shrink-0" aria-hidden="true">{app.art}</svg>
                </button>
            ))}
            <div className="ml-auto flex items-center">
                <button className="mr-[17px] flex items-center gap-2 whitespace-nowrap">
                    <svg width="24" height="24" viewBox="0 0 24 24" aria-hidden="true">
                        <path d="M16 1a11 11 0 1 1-14 14c8 4 17-5 14-14z" fill="#f6a93b" /><path d="M1 10c-2-4 2-6 4-5 1-5 8-4 8 0 4 0 4 5 1 5z" fill="#c9dcf5" /><path d="M12 22c-2-3 1-5 3-4 2-3 6-2 6 1 3 0 3 3 1 3z" fill="#e9f1fc" />
                    </svg>
                    <span>26°C</span><span>Eclaircies</span>
                </button>
                <button aria-label="Icônes cachées" className="flex w-[26px] justify-center"><ChevronUp size={18} strokeWidth={1.6} /></button>
                <svg width="14" height="14" viewBox="0 0 14 14" className="ml-1.5" fill="none" stroke="#fff" strokeWidth="1.200" aria-hidden="true">
                    <path d="M1 13C1 6 6 1 13 1" opacity="0.600" /><path d="M4 13c0-5 4-9 9-9M7 13c0-3 3-6 6-6M10 13c0-2 1-3 3-3" /><circle cx="12" cy="12" r="1" fill="#fff" stroke="none" />
                </svg>
                <svg width="18" height="14" viewBox="0 0 18 14" className="ml-1.5" fill="none" stroke="#fff" strokeWidth="1.300" aria-hidden="true"><path d="M6 4h10v8H5V9M16 6h1v4h-1" /><path d="M1 1v3h5V1M3.500 4v4M10 8h5" /></svg>
                <Volume2 size={17} strokeWidth={1.5} className="ml-1.5" />
                <svg width="24" height="14" viewBox="0 0 24 14" className="ml-2" fill="none" stroke="#fff" aria-hidden="true">
                    <path d="M1 1h22v12H1z" /><path d="M4 4h16M4 7h16" strokeWidth="1.400" strokeDasharray="1.500 1" /><path d="M7 10h10" strokeWidth="1.400" />
                </svg>
                <span className="ml-3 text-[12px]">FRA</span>
                <time className="ml-3 flex w-[62px] flex-col text-center text-[11px] leading-[18px]"><span>22:08</span><span>26/08/2024</span></time>
                <button aria-label="Notifications" className="mr-5 ml-[15px]"><MessageSquare size={18} strokeWidth={1.5} /></button>
            </div>
        </div>
    </nav>
);

export default function App() {
    return (
        <div className="flex h-screen min-h-[600px] flex-col overflow-hidden bg-white font-['Noto_Sans',sans-serif] text-[11px] leading-4 text-[#1c1c1c]">
            <TitleBar />
            <Ribbon />
            <RibbonTabs />
            <div className="flex min-h-0 flex-1">
                <FeaturePanel />
                <Viewport />
            </div>
            <ModelTabs />
            <StatusBar />
            <Taskbar />
        </div>
    );
}
